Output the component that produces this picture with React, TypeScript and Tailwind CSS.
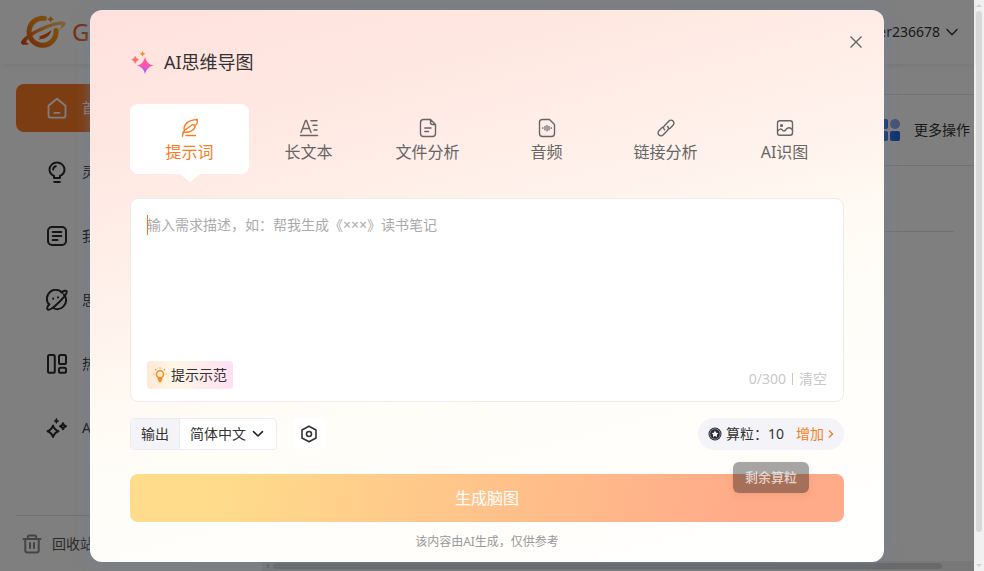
import type { ReactNode } from "react";

function Logo() {
  return (
    <svg width="46" height="36" viewBox="0 0 46 36" fill="none" aria-hidden="true">
      <defs>
        <linearGradient id="logoRing" x1="38" y1="4" x2="8" y2="32" gradientUnits="userSpaceOnUse">
          <stop stopColor="#ffa81c" />
          <stop offset="0.5" stopColor="#f98d14" />
          <stop offset="1" stopColor="#ea5a10" />
        </linearGradient>
        <linearGradient id="logoOrbit" x1="45" y1="8" x2="1" y2="30" gradientUnits="userSpaceOnUse">
          <stop stopColor="#ffc878" />
          <stop offset="0.5" stopColor="#fb9a30" />
          <stop offset="1" stopColor="#e24408" />
        </linearGradient>
      </defs>
      <path d="M24.500 4.400A13.500 13.500 0 1 0 36 16.500" stroke="url(#logoRing)" strokeWidth="5" strokeLinecap="round" />
      <path d="M45.500 8.800C44 5.600 32 8 19.500 14C9 19 .6 25.500 1 29C1.300 31.400 5.500 31.200 9.500 30C7 29.400 5.600 28.400 6.800 26.600C9.500 22.600 20 17 30 13.200C36 11 41.500 9.800 41.500 11.500C41.500 13.500 39.500 15.300 36 18C41.500 15 46.200 11.500 45.500 8.800Z" fill="url(#logoOrbit)" />
      <path d="M31.500 16C30.500 21.500 25.500 25.500 18 25.500C21.500 23.500 19.500 22.500 18.500 22.500C24 21 28 19 31.500 16Z" fill="#ee5a14" />
      <path d="M30.600 2Q31.100 4.700 34 5.300Q31.100 6 30.600 8.600Q30 6 27.200 5.300Q30 4.700 30.600 2Z" fill="#f9921f" />
    </svg>
  );
}

function SideIcon({ children }: { children: ReactNode }) {
  return (
    <svg width="22" height="22" viewBox="0 0 22 22" fill="none" stroke="currentColor" strokeWidth="2" strokeLinecap="round" strokeLinejoin="round" className="shrink-0" aria-hidden="true">
      {children}
    </svg>
  );
}

const navItems = [
  {
    label: "首页",
    icon: (
      <SideIcon>
        <path d="M2.500 8.700L11 1.800L19.500 8.700V18.500Q19.500 20.700 17.300 20.700H4.700Q2.500 20.700 2.500 18.500Z" strokeWidth="1.800" />
        <path d="M8.500 15.800H13.500" strokeWidth="1.800" />
      </SideIcon>
    ),
  },
  {
    label: "灵感",
    icon: (
      <SideIcon>
        <path d="M8 17V14.800C5.300 13.500 3.500 11.300 3.500 8.700A7.500 7.200 0 0 1 18.500 8.700C18.500 11.300 16.700 13.500 14 14.800V17Z" />
        <path d="M8.200 20.900H13.800M7.200 8.500C7.300 7 8.300 5.700 9.800 5.300" />
      </SideIcon>
    ),
  },
  {
    label: "我的",
    icon: (
      <SideIcon>
        <rect x="2" y="2" width="18" height="18" rx="4" />
        <path d="M6.700 7H15.300M6.700 11H15.300M6.700 15H11.500" />
      </SideIcon>
    ),
  },
  {
    label: "思维",
    icon: (
      <SideIcon>
        <path d="M16.300 3.700A8.800 8.800 0 0 0 3.200 15.700M19.400 8A8.800 8.800 0 0 1 7.500 19.200" />
        <path d="M15.500 3.200C18.300 1.400 20.200 1.300 20.600 2.200C21.400 4 17.200 9.300 12.500 13.700C8 18 3 21.600 1.600 20.400C.8 19.600 1.300 17.600 3.200 15.200M17.900 5.500L19.100 8" />
        <path d="M7.200 9.600V9.700M12 8.300V8.400" />
      </SideIcon>
    ),
  },
  {
    label: "热门",
    icon: (
      <SideIcon>
        <rect x="2" y="2" width="6.800" height="17.800" rx="1.600" />
        <rect x="13" y="2" width="7" height="9" rx="1.600" />
        <rect x="13" y="14.800" width="7" height="5" rx="1.600" />
      </SideIcon>
    ),
  },
  {
    label: "AI",
    icon: (
      <SideIcon>
        <path d="M7 8.500Q8.200 12.700 12.500 14.200Q8.200 15.700 7 20Q5.800 15.700 1.500 14.200Q5.800 12.700 7 8.500Z" />
        <path d="M17 6.300Q17.600 8.700 20 9.300Q17.600 10 17 12.300Q16.400 10 14 9.300Q16.400 8.700 17 6.300Z" />
        <path d="M10.400 1.500Q10.800 3.500 12.800 4Q10.800 4.500 10.400 6.500Q10 4.500 8 4Q10 3.500 10.400 1.500Z" fill="currentColor" strokeWidth="0.600" />
      </SideIcon>
    ),
  },
];

function TabIcon({ children }: { children: ReactNode }) {
  return (
    <svg width="20" height="20" viewBox="0 0 20 20" fill="none" stroke="currentColor" strokeWidth="1.400" strokeLinecap="round" strokeLinejoin="round" aria-hidden="true">
      {children}
    </svg>
  );
}

const tabs = [
  {
    label: "提示词",
    icon: (
      <TabIcon>
        <path d="M2.500 18.200C2.500 15.500 3 14 4.500 12.300L12.700 6.500M4.200 12.500C3.200 7 7.500 2 17.300 1.500C17.800 3.500 17.300 5.300 16.300 6.600L13.800 7L15.200 8.700C14 12.300 9.500 15 3.600 14M6 17.500H15.500" />
      </TabIcon>
    ),
  },
  {
    label: "长文本",
    icon: (
      <TabIcon>
        <path d="M2 14.500L6.500 2.500H7.500L12 14.500M3.800 10.500H10.200M12 2.800H18M14 7.300H18M15 12H18M1.500 17.500H18.500" />
      </TabIcon>
    ),
  },
  {
    label: "文件分析",
    icon: (
      <TabIcon>
        <path d="M12.500 1.500H5.500Q2.500 1.500 2.500 4.500V15.500Q2.500 18.500 5.500 18.500H14.500Q17.500 18.500 17.500 15.500V6.500L12.500 1.500V4.500Q12.500 6.500 14.500 6.500H17.500M6.800 10H13M6.800 13.500H10.500" />
      </TabIcon>
    ),
  },
  {
    label: "音频",
    icon: (
      <TabIcon>
        <path d="M12.500 1.500H5.500Q2.500 1.500 2.500 4.500V15.500Q2.500 18.500 5.500 18.500H14.500Q17.500 18.500 17.500 15.500V6.500Z" />
        <path d="M5.800 9.500V10.500M8 8.300V12M10 7.300V13M12 8.300V12M14.200 9.500V10.500" strokeWidth="1.200" />
      </TabIcon>
    ),
  },
  {
    label: "链接分析",
    icon: (
      <TabIcon>
        <path d="M8.600 11.800C7.200 10.600 7.200 9 8.400 7.800L12.700 3.200C14 1.800 15.900 1.900 17 3C18.200 4.200 18.200 6 17 7.200L13.600 10.700" />
        <path d="M11.400 8.400C12.800 9.500 12.800 11 11.600 12.200L7.300 16.800C6 18.200 4.100 18.100 3 17C1.800 15.800 1.800 14 3 12.800L6.400 9.300" />
      </TabIcon>
    ),
  },
  {
    label: "AI识图",
    icon: (
      <TabIcon>
        <rect x="2.500" y="2.700" width="15" height="14.600" rx="2.500" />
        <path d="M2.700 13C4.500 10.500 6.500 10.600 7.700 12.300C8.500 13.400 9.500 13.300 10.500 12C12.500 9.200 15 9 17.300 11.500" />
        <circle cx="6.500" cy="7.500" r="0.900" fill="currentColor" />
      </TabIcon>
    ),
  },
];

function Header() {
  return (
    <header className="flex h-16 shrink-0 items-center justify-between pr-4 pl-5 shadow-[0_2px_6px_rgba(0,0,0,0.06)]">
      <a href="#home" className="flex items-center gap-1.5 text-2xl leading-8 text-[#ea641a]">
        <Logo />
        <span>GitMind</span>
      </a>
      <button type="button" className="flex items-center gap-1.5 text-sm text-[#333]">
        User236678
        <svg width="12" height="8" viewBox="0 0 12 8" fill="none" stroke="currentColor" strokeWidth="1.400" aria-hidden="true">
          <path d="M0.500 1L6 6.800L11.500 1" />
        </svg>
      </button>
    </header>
  );
}

function Sidebar() {
  return (
    <aside className="flex w-[262px] shrink-0 flex-col px-4 pt-5">
      <nav className="flex flex-col gap-4">
        {navItems.map((item, i) => (
          <a
            key={item.label}
            href={"#nav-" + i}
            className={
              "flex h-12 items-center gap-3.5 rounded-lg pl-[30px] text-sm " +
              (i === 0 ? "bg-[#fb7a26] text-white" : "text-[#2a2a2a]")
            }
          >
            {item.icon}
            {item.label}
          </a>
        ))}
      </nav>
      <a href="#recycle" className="mt-auto flex h-14 items-center gap-2.5 border-t border-[#e2e2e2] pl-1.5 text-sm text-[#555]">
        <svg width="20" height="20" viewBox="0 0 20 20" fill="none" stroke="#8a8a8a" strokeWidth="2" strokeLinecap="round" strokeLinejoin="round" aria-hidden="true">
          <path d="M1.500 5H18.500M6 4.500V2.500Q6 1.500 7 1.500H13Q14 1.500 14 2.500V4.500M3.300 5.500V16.500Q3.300 18.500 5.300 18.500H14.700Q16.700 18.500 16.700 16.500V5.500M8 9V14M12 9V14" />
        </svg>
        回收站
      </a>
    </aside>
  );
}

function Workspace() {
  return (
    <main className="flex min-w-0 flex-1 flex-col">
      <div className="mt-[30px] flex h-[72px] items-center justify-end border-y border-[#e4e4e4] pr-1">
        <button type="button" className="flex items-center gap-3.5 text-sm text-[#333]">
          <svg width="22" height="22" viewBox="0 0 22 22" aria-hidden="true">
            <rect width="10" height="10" rx="2" fill="#2468e0" />
            <circle cx="17" cy="5" r="5" fill="#8ba9ec" />
            <rect y="12" width="10" height="10" rx="2" fill="#2468e0" />
            <rect x="12" y="12" width="10" height="10" rx="2" fill="#2468e0" />
          </svg>
          更多操作
        </button>
      </div>
      <div className="mr-5 ml-6 h-[66px] border-b border-[#e4e4e4]" />
      <div className="mt-auto flex h-2.5 items-center bg-[#f1f1f1] pr-8 pl-1">
        <svg width="3" height="6" viewBox="0 0 3 6" fill="#c4c4c4" aria-hidden="true">
          <path d="M3 0V6L0 3Z" />
        </svg>
        <div className="ml-1 h-1.5 flex-1 rounded-full bg-[#d4d4d4]" />
      </div>
    </main>
  );
}

function Title() {
  return (
    <h1 className="flex h-7 items-center gap-2.5 text-lg text-[#333]">
      <svg width="24" height="24" viewBox="0 0 24 24" aria-hidden="true">
        <defs>
          <linearGradient id="bigStar" x1="15" y1="8" x2="15" y2="24" gradientUnits="userSpaceOnUse">
            <stop stopColor="#ff5d7a" />
            <stop offset="0.500" stopColor="#f557b8" />
            <stop offset="1" stopColor="#9257ff" />
          </linearGradient>
        </defs>
        <path d="M15 7Q16.500 14.300 23.500 15.500Q16.500 17 15 24Q13.500 17 7 15.500Q13.500 14.300 15 7Z" fill="url(#bigStar)" />
        <path d="M5.200 5.500Q6 9 9.700 9.700Q6 10.400 5.200 14Q4.400 10.400 .8 9.700Q4.400 9 5.200 5.500Z" fill="#ff6d6d" />
        <path d="M12.500 1Q13 3.200 15.300 3.700Q13 4.200 12.500 6.500Q12 4.200 9.700 3.700Q12 3.200 12.500 1Z" fill="#ff8a1f" />
      </svg>
      AI思维导图
    </h1>
  );
}

function Tabs() {
  return (
    <div role="tablist" className="mt-7 grid grid-cols-6">
      {tabs.map((tab, i) => (
        <button
          key={tab.label}
          type="button"
          role="tab"
          aria-selected={i === 0}
          className={
            "relative flex h-[70px] flex-col items-center gap-0.5 rounded-lg pt-3.5 text-base " +
            (i === 0 ? "bg-white text-[#f87c24]" : "text-[#666]")
          }
        >
          {tab.icon}
          <span className="leading-6">{tab.label}</span>
          {i === 0 && (
            <svg width="20" height="8" viewBox="0 0 20 8" fill="#fff" className="absolute top-full" aria-hidden="true">
              <path d="M0 0H20L11.200 7.300Q10 8.200 8.800 7.300Z" />
            </svg>
          )}
        </button>
      ))}
    </div>
  );
}

function PromptBox() {
  return (
    <div className="relative mt-6 flex h-[204px] flex-col rounded-lg border border-[#ececef] bg-white px-4 pt-4 pb-3">
      <textarea
        aria-label="需求描述"
        placeholder="输入需求描述，如：帮我生成《×××》读书笔记"
        className="w-full flex-1 resize-none text-sm leading-5 text-[#333] outline-none placeholder:text-[#aaa]"
      />
      <span className="absolute top-4 left-4 h-5 w-px bg-[#e8752a]" />
      <div className="flex items-center justify-between">
        <button type="button" className="flex h-7 items-center gap-1 rounded bg-linear-to-r from-[#ffe8d6] via-[#fff8e6] via-30% to-[#ffdff4] px-1.5 text-sm text-[#333]">
          <svg width="14" height="16" viewBox="0 0 14 16" fill="none" stroke="#ff8a1f" strokeWidth="1.500" strokeLinecap="round" aria-hidden="true">
            <circle cx="7" cy="7.200" r="3.500" />
            <path d="M5.300 11.300H8.700M5.500 12.800H8.500M6.400 14.300H7.600" strokeWidth="1.700" />
            <path d="M.8 7H1M13 7H13.200M2.300 2.300L2.800 2.800M11.700 2.300L11.200 2.800M7 .9V1.200" strokeWidth="1.100" />
          </svg>
          提示示范
        </button>
        <div className="mt-2 flex items-center gap-1.5 text-sm text-[#c8c8c8]">
          <span>0/300</span>
          <span className="h-3 w-px bg-[#c8c8c8]" />
          <button type="button">清空</button>
        </div>
      </div>
    </div>
  );
}

function Options() {
  return (
    <div className="mt-4 flex items-center">
      <div className="flex h-8 items-stretch overflow-hidden rounded border border-[#ececf0] bg-white text-sm text-[#333]">
        <label htmlFor="language" className="flex items-center border-r border-[#ececf0] bg-[#f4f4f8] px-2.5">
          输出
        </label>
        <div className="relative flex items-center">
          <select id="language" className="h-full w-24 appearance-none bg-transparent pl-2.5 outline-none">
            <option>简体中文</option>
          </select>
          <svg width="12" height="8" viewBox="0 0 12 8" fill="none" stroke="#222" strokeWidth="1.600" strokeLinecap="round" strokeLinejoin="round" className="pointer-events-none absolute right-3" aria-hidden="true">
            <path d="M1.500 1.700L6 6L10.500 1.700" />
          </svg>
        </div>
      </div>
      <button type="button" aria-label="设置" className="ml-4 flex size-8 items-center justify-center rounded bg-white text-[#333]">
        <svg width="18" height="18" viewBox="0 0 18 18" fill="none" stroke="currentColor" strokeWidth="1.600" strokeLinejoin="round" aria-hidden="true">
          <path d="M9 1.200L16 5V13L9 16.800L2 13V5Z" />
          <circle cx="9" cy="9" r="2.500" />
        </svg>
      </button>
      <div className="relative ml-auto flex h-8 items-center rounded-full bg-[#f4f4f8] px-2.5 text-sm text-[#333]">
        <svg width="14" height="14" viewBox="0 0 14 14" aria-hidden="true">
          <circle cx="7" cy="7" r="6.500" fill="#262837" />
          <circle cx="7" cy="7" r="5.200" fill="none" stroke="#9a9cab" strokeWidth="0.800" />
          <path d="M7 3.600L8.100 5.700L10.400 6.100L8.800 7.800L9.100 10.100L7 9.100L4.900 10.100L5.200 7.800L3.600 6.100L5.900 5.700Z" fill="#fff" />
        </svg>
        <span className="ml-1">算粒：</span>
        <span>10</span>
        <button type="button" className="ml-3 flex items-center gap-1 text-[#f87c24]">
          增加
          <svg width="6" height="8" viewBox="0 0 6 8" fill="none" stroke="currentColor" strokeWidth="1.400" aria-hidden="true">
            <path d="M1 0.600L4.500 4L1 7.400" />
          </svg>
        </button>
        <div role="tooltip" className="absolute top-11 left-1/2 z-10 -translate-x-1/2 rounded-md bg-black/35 px-3 py-1.5 text-[13px] leading-[19px] font-medium whitespace-nowrap text-white/70 shadow-[0_2px_8px_rgba(0,0,0,0.08)]">
          剩余算粒
        </div>
      </div>
    </div>
  );
}

function MindMapDialog() {
  return (
    <section role="dialog" aria-label="AI思维导图" className="relative w-full max-w-[794px] rounded-xl bg-[linear-gradient(165deg,#ffe1dd_0%,#ffe8e2_20%,#fff3ed_43%,#fffaf3_53%,#fffdf8_62%,#fffffe_100%)] px-10 pt-[38px] pb-3 shadow-[0_0_14px_rgba(106,128,165,0.55)]">
      <button type="button" aria-label="关闭" className="absolute top-5 right-4 flex size-6 items-center justify-center text-[#666]">
        <svg width="12" height="12" viewBox="0 0 12 12" fill="none" stroke="currentColor" strokeWidth="1.400" aria-hidden="true">
          <path d="M0.500 0.500L11.500 11.500M11.500 0.500L0.500 11.500" />
        </svg>
      </button>
      <Title />
      <Tabs />
      <PromptBox />
      <Options />
      <button type="button" className="mt-6 h-12 w-full rounded-lg bg-[linear-gradient(99deg,#ffdc8b_12%,#ffab89_85%)] text-base text-white">
        生成脑图
      </button>
      <p className="mt-3 text-center text-xs leading-4 text-[#999]">该内容由AI生成，仅供参考</p>
    </section>
  );
}

function PageScrollbar() {
  return (
    <div className="flex w-2.5 shrink-0 flex-col items-center bg-[#f1f1f1] py-1 text-[#d0d0d0]">
      <svg width="6" height="3" viewBox="0 0 6 3" fill="currentColor" aria-hidden="true">
        <path d="M0 3H6L3 0Z" />
      </svg>
      <div className="mt-1 mb-8 w-1.5 flex-1 rounded-full bg-[#d8d8d8]" />
      <svg width="6" height="3" viewBox="0 0 6 3" fill="currentColor" aria-hidden="true">
        <path d="M0 0H6L3 3Z" />
      </svg>
    </div>
  );
}

export default function App() {
  return (
    <div className="flex h-screen overflow-hidden bg-white font-['Noto_Sans','Noto_Sans_CJK_SC',sans-serif]">
      <div className="relative flex min-w-0 flex-1 flex-col">
        <Header />
        <div className="flex min-h-0 flex-1">
          <Sidebar />
          <Workspace />
        </div>
        <div className="absolute inset-0 flex items-start justify-center overflow-hidden bg-black/50 pt-2.5">
          <MindMapDialog />
        </div>
      </div>
      <PageScrollbar />
    </div>
  );
}
